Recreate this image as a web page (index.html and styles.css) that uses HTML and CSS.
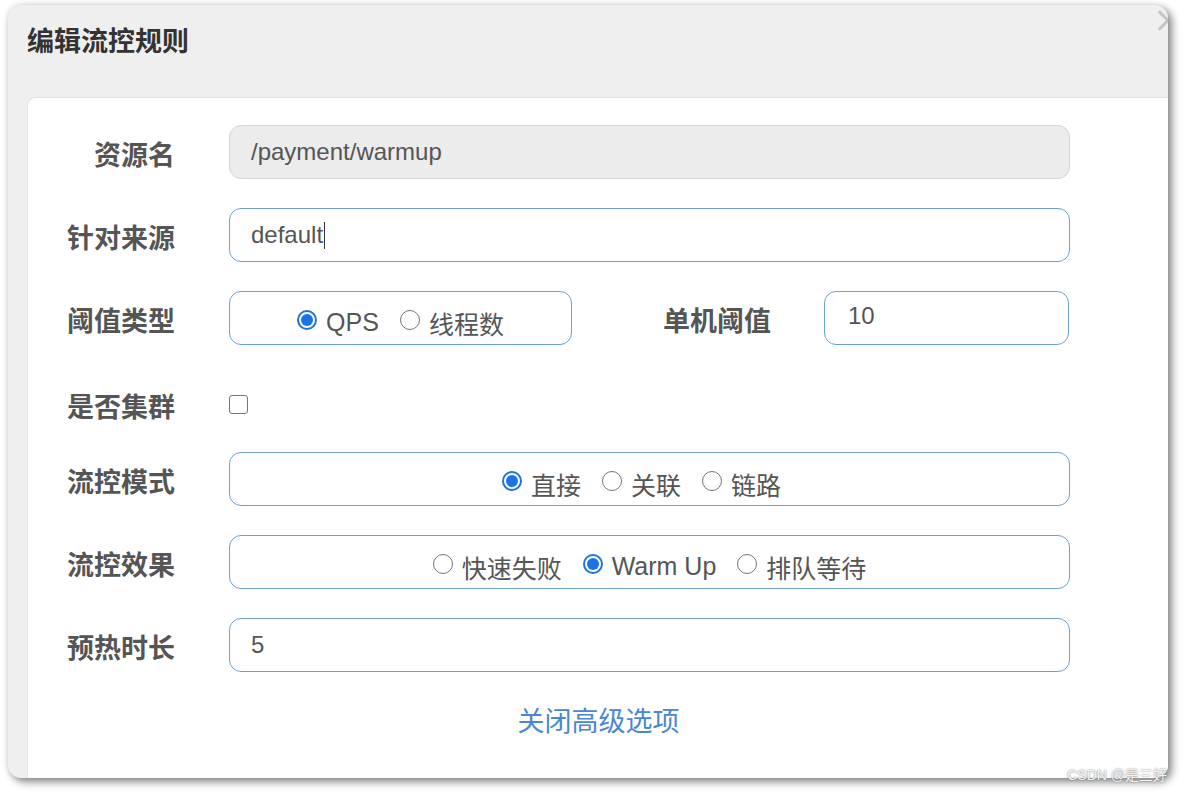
FILE: index.html
```html
<!DOCTYPE html>
<html lang="zh-CN">
<head>
<meta charset="utf-8">
<title>编辑流控规则</title>
<link rel="stylesheet" href="styles.css">
</head>
<body>
<div class="dialog">
  <span class="close" aria-label="close"></span>
  <div class="dialog-header"><h3 class="title">编辑流控规则</h3></div>
  <div class="card">
    <div class="form">
      <div class="row">
        <label class="label">资源名</label>
        <div class="field disabled">/payment/warmup</div>
      </div>
      <div class="row">
        <label class="label">针对来源</label>
        <div class="field">default<span class="caret"></span></div>
      </div>
      <div class="row">
        <label class="label">阈值类型</label>
        <div class="field radios narrow">
          <span class="radio on"></span><span class="rtext">QPS</span>
          <span class="radio"></span><span class="rtext">线程数</span>
        </div>
        <label class="label label-mid">单机阈值</label>
        <div class="field small">10</div>
      </div>
      <div class="row row-short">
        <label class="label">是否集群</label>
        <span class="checkbox"></span>
      </div>
      <div class="row">
        <label class="label">流控模式</label>
        <div class="field radios radios-shift">
          <span class="radio on"></span><span class="rtext">直接</span>
          <span class="radio"></span><span class="rtext">关联</span>
          <span class="radio"></span><span class="rtext">链路</span>
        </div>
      </div>
      <div class="row">
        <label class="label">流控效果</label>
        <div class="field radios">
          <span class="radio"></span><span class="rtext">快速失败</span>
          <span class="radio on"></span><span class="rtext">Warm Up</span>
          <span class="radio"></span><span class="rtext">排队等待</span>
        </div>
      </div>
      <div class="row">
        <label class="label">预热时长</label>
        <div class="field">5</div>
      </div>
    </div>
    <div class="link-row"><a class="link">关闭高级选项</a></div>
  </div>
</div>
<div class="watermark">CSDN @是三好</div>
</body>
</html>
```
FILE: styles.css
```css
html, body {
  margin: 0;
  padding: 0;
  background: #ffffff;
}
body {
  width: 1184px;
  height: 792px;
  overflow: hidden;
  position: relative;
  font-family: "Liberation Sans", "Noto Sans CJK SC", sans-serif;
}
.dialog {
  position: relative;
  margin: 5px 0 0 8px;
  width: 1160px;
  height: 773px;
  background: #efefef;
  border-radius: 13px;
  overflow: hidden;
  box-shadow: 4px 4px 8px rgba(0,0,0,0.45), 0 0 6px rgba(0,0,0,0.12);
  display: flex;
  flex-direction: column;
}
.close {
  position: absolute;
  top: 4px;
  right: -12px;
  width: 24px;
  height: 24px;
}
.close::before, .close::after {
  content: "";
  position: absolute;
  left: -1px;
  top: 10px;
  width: 26px;
  height: 3px;
  background: #c4c4c4;
  transform: rotate(45deg);
}
.close::after {
  transform: rotate(-45deg);
}
.dialog-header {
  height: 92px;
  flex: none;
  padding-left: 19px;
}
.title {
  margin: 0;
  padding-top: 18px;
  font-family: "Noto Sans CJK SC", sans-serif;
  font-weight: 700;
  font-size: 27px;
  line-height: 34px;
  color: #333333;
}
.card {
  flex: 1;
  margin-left: 19px;
  width: 1142px;
  background: #ffffff;
  border-top-left-radius: 9px;
  border-top: 1px solid #e2e2e2;
  border-left: 1px solid #e6e6e6;
  padding-top: 27px;
  box-sizing: border-box;
}
.form {
  display: flex;
  flex-direction: column;
  gap: 29px;
}
.row {
  display: flex;
  align-items: center;
  height: 54px;
}
.row-short {
  height: 49px;
}
.label {
  width: 147px;
  flex: none;
  text-align: right;
  font-family: "Noto Sans CJK SC", sans-serif;
  font-weight: 700;
  font-size: 27px;
  color: #555555;
  padding-top: 3px;
  margin-right: 54px;
}
.row-short .label {
  padding-top: 13px;
}
.label-mid {
  width: 199px;
  margin-right: 53px;
}
.field {
  width: 841px;
  height: 54px;
  box-sizing: border-box;
  border: 1px solid #6e9fd6;
  border-radius: 12px;
  padding-left: 21px;
  display: flex;
  align-items: center;
  font-size: 24px;
  color: #555555;
  background: #ffffff;
}
.field.disabled {
  background: #ececec;
  border-color: #d4d4d4;
}
.field.narrow {
  width: 343px;
}
.field.small {
  width: 245px;
  padding-left: 23px;
  padding-bottom: 4px;
}
.caret {
  display: inline-block;
  width: 1px;
  height: 27px;
  background: #333;
  margin-left: 1px;
}
.radios {
  justify-content: center;
  padding-left: 0;
  padding-top: 9px;
}
.radios-shift {
  padding-right: 16px;
}
.radio {
  width: 20px;
  height: 20px;
  box-sizing: border-box;
  border: 1.5px solid #767676;
  border-radius: 50%;
  flex: none;
  margin-right: 9px;
  margin-left: 21px;
  position: relative;
  top: -3px;
}
.radio:first-child {
  margin-left: 0;
}
.radio.on {
  border: 2px solid #1a73e8;
}
.radio.on::after {
  content: "";
  position: absolute;
  left: 2px;
  top: 2px;
  width: 12px;
  height: 12px;
  border-radius: 50%;
  background: #1a73e8;
}
.rtext {
  font-family: "Liberation Sans", "Noto Sans CJK SC", sans-serif;
  font-size: 25px;
  color: #555555;
}
.checkbox {
  width: 19px;
  height: 19px;
  box-sizing: border-box;
  border: 1.5px solid #767676;
  border-radius: 3px;
  margin-top: 12px;
}
.link-row {
  display: flex;
  justify-content: center;
  padding-top: 28px;
}
.link {
  font-family: "Noto Sans CJK SC", sans-serif;
  font-size: 27px;
  color: #4a86d4;
  cursor: pointer;
}
.watermark {
  position: absolute;
  right: 17px;
  bottom: 8px;
  font-family: "Liberation Sans", "Noto Sans CJK SC", sans-serif;
  font-size: 14px;
  color: #f4f4f4;
  text-shadow: 0 0 2px #666;
}
```
